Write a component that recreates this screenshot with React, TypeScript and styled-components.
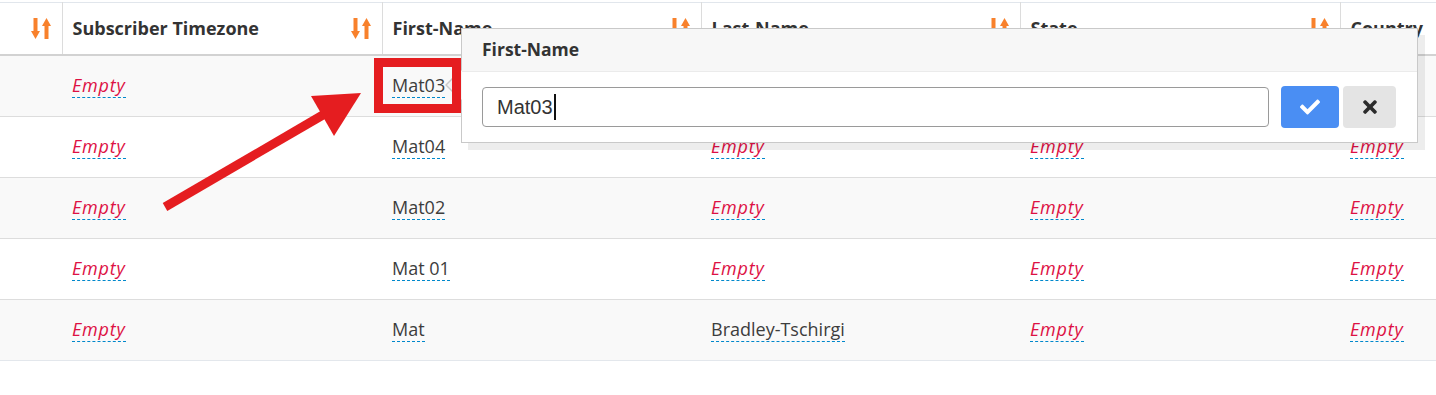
import styled, { createGlobalStyle } from 'styled-components';
import { FaCheck, FaTimes } from 'react-icons/fa';

const GlobalStyle = createGlobalStyle`
  html, body {
    margin: 0;
    padding: 0;
    background: #fff;
    overflow: hidden;
  }
  body {
    font-family: 'Open Sans', 'Noto Sans', sans-serif;
    color: #333;
  }
`;

const Page = styled.div`
  position: relative;
  width: 1436px;
  height: 395px;
  padding-top: 2px;
  box-sizing: border-box;
  overflow: hidden;
`;

const Table = styled.table`
  border-collapse: collapse;
  table-layout: fixed;
  width: 1662px;
  border-top: 1px solid #e1e6ec;
`;

const HeadCell = styled.th<{ $width: number }>`
  width: ${({ $width }) => $width}px;
  height: 52px;
  padding: 0 11px 0 10px;
  box-sizing: border-box;
  border-right: 1px solid #dcdcdc;
  border-bottom: 2px solid #d2d2d2;
  text-align: left;
  vertical-align: middle;
  font-size: 18px;
  font-weight: 700;
  color: #333;
  white-space: nowrap;
`;

const HeadInner = styled.div`
  display: flex;
  align-items: center;
  justify-content: space-between;
  gap: 8px;
`;

const Row = styled.tr<{ $striped: boolean }>`
  background: ${({ $striped }) => ($striped ? '#f9f9f9' : '#fff')};
  border-bottom: 1px solid #dddddd;

  &:last-child {
    border-bottom-color: #e3e7ec;
  }
`;

const Cell = styled.td`
  height: 60px;
  padding: 0 10px;
  vertical-align: middle;
  white-space: nowrap;
`;

const Editable = styled.span<{ $empty: boolean }>`
  display: inline-block;
  font-size: 18px;
  line-height: 24px;
  font-style: ${({ $empty }) => ($empty ? 'italic' : 'normal')};
  letter-spacing: ${({ $empty }) => ($empty ? '0.8px' : '0')};
  color: ${({ $empty }) => ($empty ? '#dd1144' : '#3d3d3d')};
  border-bottom: 1px dashed #0088cc;
`;

const Popover = styled.div`
  position: absolute;
  left: 461px;
  top: 28px;
  width: 957px;
  box-sizing: border-box;
  background: #fff;
  border: 1px solid #c9c9c9;
  box-shadow: 7px 7px 0 rgba(0, 0, 0, 0.07);
  z-index: 2;

  &::before,
  &::after {
    content: '';
    position: absolute;
    width: 0;
    height: 0;
    border-style: solid;
    border-color: transparent;
  }
  &::before {
    left: -17px;
    top: 40px;
    border-width: 16px 16px 16px 0;
    border-right-color: #c9c9c9;
  }
  &::after {
    left: -15px;
    top: 41px;
    border-width: 15px 15px 15px 0;
    border-right-color: #f3f3f3;
  }
`;

const PopTitle = styled.div`
  height: 43px;
  display: flex;
  align-items: center;
  padding: 0 20px 2px;
  box-sizing: border-box;
  background: #f7f7f7;
  border-bottom: 1px solid #ebebeb;
  font-size: 17.5px;
  font-weight: 700;
  color: #333;
`;

const PopBody = styled.div`
  height: 70px;
  box-sizing: border-box;
  display: flex;
  align-items: center;
  padding: 0 21px 0 20px;
`;

const Field = styled.div`
  flex: 1;
  height: 40px;
  box-sizing: border-box;
  display: flex;
  align-items: center;
  padding: 0 14px;
  border: 1px solid #9a9a9a;
  border-radius: 4px;
  font-family: 'Liberation Sans', Arial, sans-serif;
  font-size: 20px;
  color: #333;
`;

const Caret = styled.span`
  display: inline-block;
  width: 2px;
  height: 26px;
  margin-left: 1px;
  background: #111;
`;

const ActionButton = styled.button<{ $primary?: boolean }>`
  height: 42px;
  width: ${({ $primary }) => ($primary ? '58px' : '53px')};
  margin-left: ${({ $primary }) => ($primary ? '12px' : '4px')};
  display: flex;
  align-items: center;
  justify-content: center;
  border: none;
  border-radius: 4px;
  background: ${({ $primary }) => ($primary ? '#4a8ef3' : '#e4e4e4')};
  color: ${({ $primary }) => ($primary ? '#fff' : '#2b2b2b')};
  padding: 0;
  cursor: pointer;
`;

const Annotation = styled.svg`
  position: absolute;
  left: 0;
  top: 0;
  z-index: 3;
  pointer-events: none;
`;

const SortIcon = () => (
  <svg width="20" height="21" viewBox="0 0 20 21" fill="#f8812c">
    <rect x="2.5" y="0" width="4" height="14" />
    <polygon points="0,13 9,13 4.5,21" />
    <polygon points="11,8 20,8 15.5,0" />
    <rect x="13.5" y="7" width="4" height="14" />
  </svg>
);

const columns = [
  { title: '', width: 62 },
  { title: 'Subscriber Timezone', width: 320 },
  { title: 'First-Name', width: 319 },
  { title: 'Last-Name', width: 319 },
  { title: 'State', width: 320 },
  { title: 'Country', width: 322 },
];

const rows = [
  ['', '', 'Mat03', '', '', ''],
  ['', '', 'Mat04', '', '', ''],
  ['', '', 'Mat02', '', '', ''],
  ['', '', 'Mat 01', '', '', ''],
  ['', '', 'Mat', 'Bradley-Tschirgi', '', ''],
];

const App = () => {
  return (
    <>
      <GlobalStyle />
      <Page>
        <Table>
          <thead>
            <tr>
              {columns.map((col, i) => (
                <HeadCell key={i} $width={col.width}>
                  <HeadInner>
                    <span>{col.title}</span>
                    <SortIcon />
                  </HeadInner>
                </HeadCell>
              ))}
            </tr>
          </thead>
          <tbody>
            {rows.map((row, r) => (
              <Row key={r} $striped={r % 2 === 0}>
                {row.map((value, c) => (
                  <Cell key={c}>
                    {c > 0 && (
                      <Editable $empty={!value}>{value || 'Empty'}</Editable>
                    )}
                  </Cell>
                ))}
              </Row>
            ))}
          </tbody>
        </Table>

        <Popover>
          <PopTitle>First-Name</PopTitle>
          <PopBody>
            <Field>
              Mat03
              <Caret />
            </Field>
            <ActionButton $primary>
              <FaCheck size={20} />
            </ActionButton>
            <ActionButton>
              <FaTimes size={20} />
            </ActionButton>
          </PopBody>
        </Popover>

        <Annotation width="1436" height="395">
          <rect x="378.5" y="62.5" width="78" height="46" fill="none" stroke="#e51d20" strokeWidth="9" />
          <line x1="165" y1="207" x2="328" y2="112" stroke="#e51d20" strokeWidth="9" />
          <polygon points="361,93 311,96 334,136" fill="#e51d20" />
        </Annotation>
      </Page>
    </>
  );
};

export default App;
